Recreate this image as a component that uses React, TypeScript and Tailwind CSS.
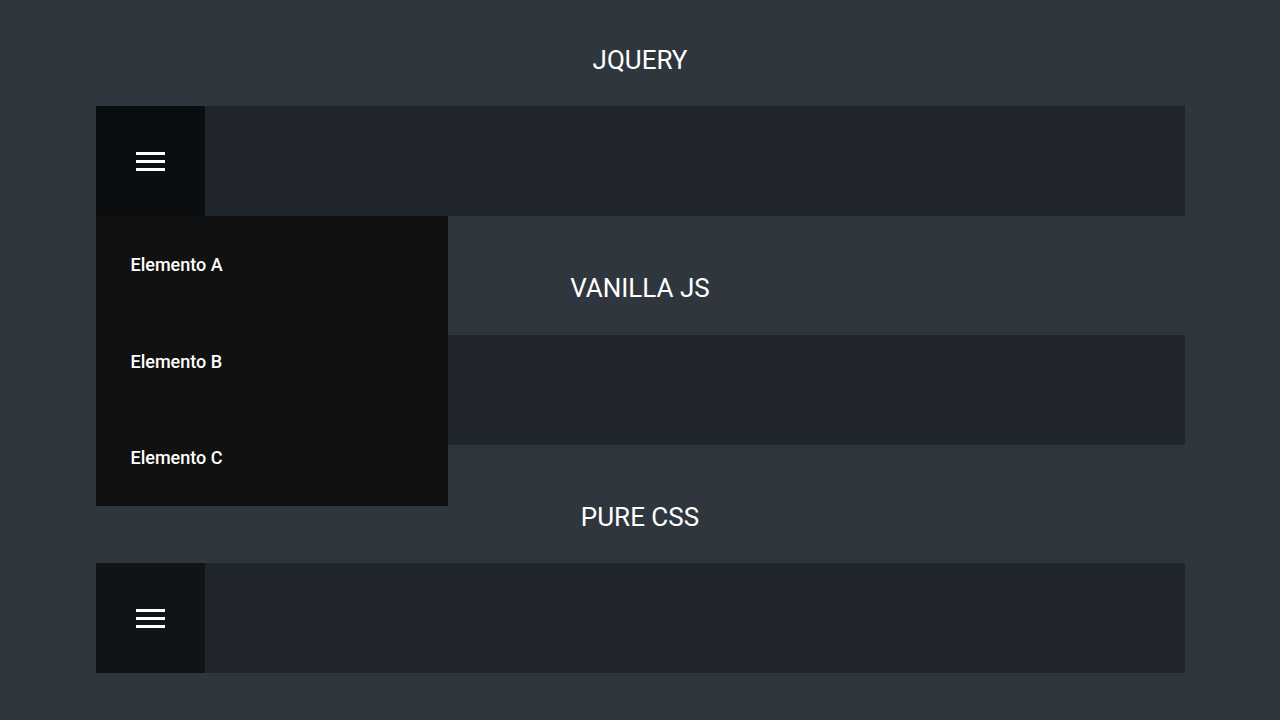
import { useState } from "react";

const items = ["Elemento A", "Elemento B", "Elemento C"];

const Burger = () => (
  <div className="flex flex-col gap-[5px] w-[29px]">
    <span className="block h-[3px] bg-white" />
    <span className="block h-[3px] bg-white" />
    <span className="block h-[3px] bg-white" />
  </div>
);

const Bar = ({
  open,
  showButton = true,
  buttonBg,
  onToggle,
}: {
  open?: boolean;
  showButton?: boolean;
  buttonBg: string;
  onToggle?: () => void;
}) => (
  <div className="relative flex h-[110px] w-[1089px] bg-[#20262c]">
    {showButton && (
      <button
        className={`flex h-full w-[109px] items-center justify-center ${buttonBg}`}
        onClick={onToggle}
      >
        <Burger />
      </button>
    )}
    {open && (
      <ul className="absolute left-0 top-[110px] z-10 w-[352px] bg-[#111111]">
        {items.map((item) => (
          <li
            key={item}
            className="flex h-[96.7px] items-center pl-[35px] text-[18px] font-medium text-white"
          >
            {item}
          </li>
        ))}
      </ul>
    )}
  </div>
);

export default function App() {
  const [open, setOpen] = useState(true);

  return (
    <div
      className="min-h-[720px] bg-[#2f363d] pt-[46px] text-white"
      style={{ fontFamily: "Roboto, 'Liberation Sans', sans-serif" }}
    >
      <div className="flex flex-col items-center">
        <h2 className="h-[28px] text-[26px] leading-[28px]">JQUERY</h2>
        <div className="mt-[32px]">
          <Bar open={open} buttonBg="bg-[#0b0e10]" onToggle={() => setOpen((p) => !p)} />
        </div>

        <h2 className="mt-[58px] h-[28px] text-[26px] leading-[28px]">VANILLA JS</h2>
        <div className="mt-[33px]">
          <Bar buttonBg="bg-[#0b0e10]" />
        </div>

        <h2 className="mt-[58px] h-[28px] text-[26px] leading-[28px]">PURE CSS</h2>
        <div className="mt-[32px]">
          <Bar buttonBg="bg-[#101417]" />
        </div>
      </div>
    </div>
  );
}
